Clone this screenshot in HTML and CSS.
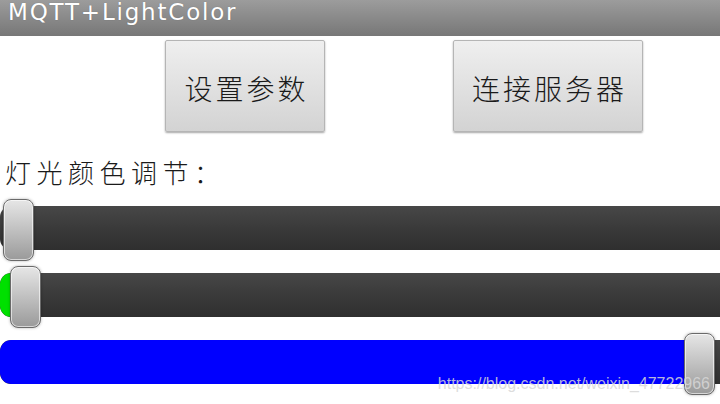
FILE: index.html
```html
<!DOCTYPE html>
<html lang="zh">
<head>
<meta charset="utf-8">
<title>MQTT+LightColor</title>
<link rel="stylesheet" href="styles.css">
</head>
<body>
<div class="app">
  <header class="titlebar"><span class="title">MQTT+LightColor</span></header>
  <div class="buttons">
    <button class="btn btn-params">设置参数</button>
    <button class="btn btn-connect">连接服务器</button>
  </div>
  <div class="label">灯光颜色调节：</div>
  <div class="sliders">
    <div class="slider">
      <div class="track"><div class="fill fill-red" style="width:0px"></div></div>
      <div class="thumb" style="left:3px"></div>
    </div>
    <div class="slider">
      <div class="track"><div class="fill fill-green" style="width:16px"></div></div>
      <div class="thumb" style="left:10px"></div>
    </div>
    <div class="slider">
      <div class="track"><div class="fill fill-blue" style="width:700px"></div></div>
      <div class="thumb" style="left:684px"></div>
    </div>
  </div>
  <div class="watermark">https://blog.csdn.net/weixin_47722966</div>
</div>
</body>
</html>
```
FILE: styles.css
```css
html, body {
  margin: 0;
  padding: 0;
  background: #ffffff;
}
.app {
  position: relative;
  width: 720px;
  height: 404px;
  overflow: hidden;
  font-family: "Noto Sans CJK SC", "Noto Sans", sans-serif;
}
.titlebar {
  height: 36px;
  background: linear-gradient(#9c9c9c, #777777);
  display: flex;
  align-items: flex-start;
  padding-left: 8px;
}
.title {
  font-family: "DejaVu Sans", sans-serif;
  color: #ffffff;
  font-size: 23px;
  line-height: 22px;
  margin-top: 1px;
  letter-spacing: 1.8px;
  text-shadow: 0 0 1px rgba(0,0,0,0.25);
}
.buttons {
  display: flex;
  gap: 128px;
  padding-left: 165px;
  margin-top: 4px;
}
.btn {
  height: 92px;
  border: 1px solid #b5b5b5;
  border-radius: 2px;
  background: linear-gradient(#efefef, #d3d3d3);
  box-shadow: 0 1px 2px rgba(0,0,0,0.35);
  font-family: "Noto Sans CJK SC", sans-serif;
  font-weight: 300;
  font-size: 28px;
  letter-spacing: 3px;
  color: #1a1a1a;
  padding: 0;
  padding-top: 3px;
  text-indent: 3px;
}
.btn-params { width: 160px; }
.btn-connect { width: 190px; }
.label {
  margin-top: 22px;
  padding-left: 5px;
  font-size: 26px;
  font-weight: 300;
  line-height: 36px;
  letter-spacing: 5.5px;
  color: #1a1a1a;
}
.sliders {
  margin-top: 9px;
  display: flex;
  flex-direction: column;
  gap: 5px;
}
.slider {
  position: relative;
  height: 62px;
}
.track {
  margin-top: 7px;
  height: 44px;
  width: 740px;
  border-radius: 11px 0 0 11px;
  background: linear-gradient(#474747, #3a3a3a 50%, #2f2f2f);
  overflow: hidden;
  display: flex;
}
.fill { height: 100%; border-radius: 11px 0 0 11px; }
.fill-red { background: #ff0000; }
.fill-green { background: #00e000; }
.fill-blue { background: #0000ff; }
.thumb {
  position: absolute;
  top: 0;
  width: 29px;
  height: 60px;
  border: 1px solid #6a6a6a;
  border-radius: 8px;
  background: linear-gradient(#e6e6e6, #c4c4c4 45%, #9a9a9a);
  box-shadow: inset 0 0 0 1px rgba(255,255,255,0.6), 0 0 3px rgba(0,0,0,0.3);
}
.watermark {
  position: absolute;
  right: 10px;
  bottom: 11px;
  font-family: "Liberation Sans", Arial, sans-serif;
  font-size: 16px;
  color: rgba(215,215,215,0.85);
}
```
